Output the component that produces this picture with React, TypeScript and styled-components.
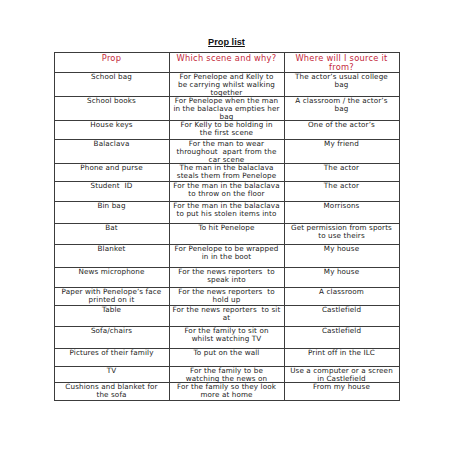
import React from "react";
import styled, { createGlobalStyle } from "styled-components";

const GlobalStyle = createGlobalStyle`
  html, body {
    margin: 0;
    padding: 0;
    background: #fff;
  }
  body {
    font-family: "DejaVu Sans", "Liberation Sans", sans-serif;
    color: #1a1a1a;
  }
`;

// lines are kept as in the source document, so wraps match
type Prop = { item: string; scene: string; source: string; h: number };

const props: Prop[] = [
  { item: "School bag", scene: "For Penelope and Kelly to\nbe carrying whilst walking\ntogether", source: "The actor\u2019s usual college\nbag", h: 24 },
  { item: "School books", scene: "For Penelope when the man\nin the balaclava empties her\nbag", source: "A classroom / the actor\u2019s\nbag", h: 24 },
  { item: "House keys", scene: "For Kelly to be holding in\nthe first scene", source: "One of the actor\u2019s", h: 19 },
  { item: "Balaclava", scene: "For the man to wear\nthroughout  apart from the\ncar scene", source: "My friend", h: 24 },
  { item: "Phone and purse", scene: "The man in the balaclava\nsteals them from Penelope", source: "The actor", h: 18 },
  { item: "Student  ID", scene: "For the man in the balaclava\nto throw on the floor", source: "The actor", h: 20 },
  { item: "Bin bag", scene: "For the man in the balaclava\nto put his stolen items into", source: "Morrisons", h: 22 },
  { item: "Bat", scene: "To hit Penelope", source: "Get permission from sports\nto use theirs", h: 21 },
  { item: "Blanket", scene: "For Penelope to be wrapped\nin in the boot", source: "My house", h: 23 },
  { item: "News microphone", scene: "For the news reporters  to\nspeak into", source: "My house", h: 20 },
  { item: "Paper with Penelope\u2019s face\nprinted on it", scene: "For the news reporters  to\nhold up", source: "A classroom", h: 18 },
  { item: "Table", scene: "For the news reporters  to sit\nat", source: "Castlefield", h: 21 },
  { item: "Sofa/chairs", scene: "For the family to sit on\nwhilst watching TV", source: "Castlefield", h: 22 },
  { item: "Pictures of their family", scene: "To put on the wall", source: "Print off in the ILC", h: 18 },
  { item: "TV", scene: "For the family to be\nwatching the news on", source: "Use a computer or a screen\nin Castlefield", h: 16 },
  { item: "Cushions and blanket for\nthe sofa", scene: "For the family so they look\nmore at home", source: "From my house", h: 18 },
];

const Page = styled.div`
  width: 453px;
  height: 453px;
  display: flex;
  flex-direction: column;
  align-items: center;
  padding-top: 37px;
  box-sizing: border-box;
`;

const Title = styled.h1`
  margin: 0 0 4px;
  font-family: "Liberation Sans", Arial, sans-serif;
  font-size: 9.2px;
  line-height: 11px;
  font-weight: bold;
  text-decoration: underline;
  color: #111;
`;

const Table = styled.div`
  width: 344px;
  border: 1px solid #3c3c3c;
  border-bottom: none;
`;

const Row = styled.div<{ $h: number }>`
  display: grid;
  grid-template-columns: 114px 115px 1fr;
  height: ${(p) => p.$h}px;
  border-bottom: 1px solid #3c3c3c;
  box-sizing: border-box;
`;

const Cell = styled.div<{ $head?: boolean }>`
  padding: ${(p) => (p.$head ? "1px 2px 0" : "0 2px")};
  text-align: center;
  white-space: pre-wrap;
  font-size: ${(p) => (p.$head ? "8.3px" : "7.2px")};
  letter-spacing: ${(p) => (p.$head ? "0.25px" : "0.12px")};
  line-height: ${(p) => (p.$head ? "8.7px" : "8px")};
  color: ${(p) => (p.$head ? "#c4283a" : "#1a1a1a")};
  & + & {
    border-left: 1px solid #3c3c3c;
  }
`;

export default function App() {
  return (
    <>
      <GlobalStyle />
      <Page>
        <Title>Prop list</Title>
        <Table>
          <Row $h={20}>
            <Cell $head>Prop</Cell>
            <Cell $head>Which scene and why?</Cell>
            <Cell $head>{"Where will I source it\nfrom?"}</Cell>
          </Row>
          {props.map((p) => (
            <Row key={p.item} $h={p.h}>
              <Cell>{p.item}</Cell>
              <Cell>{p.scene}</Cell>
              <Cell>{p.source}</Cell>
            </Row>
          ))}
        </Table>
      </Page>
    </>
  );
}
